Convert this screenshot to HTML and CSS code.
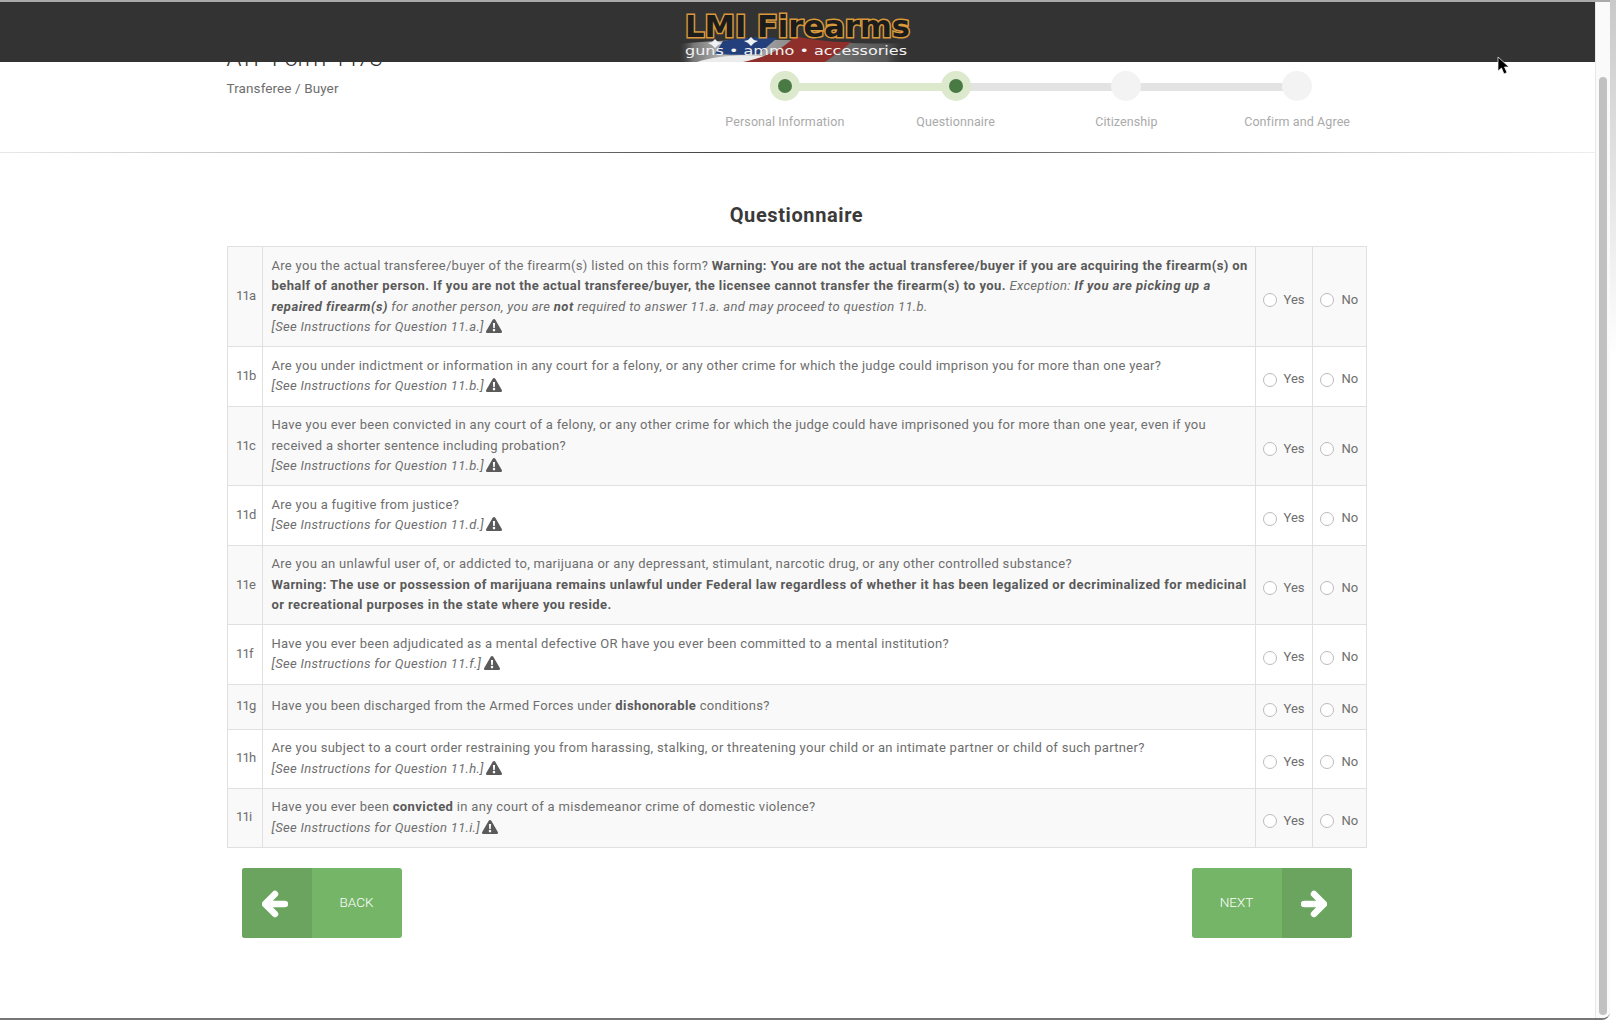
FILE: index.html
```html
<!DOCTYPE html>
<html lang="en">
<head>
    <meta charset="UTF-8">
    <title>ATF Form 4473 - Questionnaire</title>
    <link rel="stylesheet" href="styles.css">
</head>
<body>
<div class="window">
    <div class="page">
        <header class="topbar">
            <svg class="logo" width="240" height="60" viewBox="0 0 240 60">
                <defs>
                    <linearGradient id="fade" x1="0" x2="1" y1="0" y2="0">
                        <stop offset="0" stop-color="#444" stop-opacity="0"/>
                        <stop offset="0.06" stop-color="#777"/>
                        <stop offset="0.2" stop-color="#bbb"/>
                        <stop offset="0.6" stop-color="#777"/>
                        <stop offset="0.88" stop-color="#555"/>
                        <stop offset="0.96" stop-color="#333" stop-opacity="0"/>
                    </linearGradient>
                </defs>
                <path d="M0 60 V42 C40 38 100 36 150 40 C190 42 220 42 236 40 V60 Z" fill="url(#fade)"/>
                <path d="M18 60 C40 52 90 50 120 60 Z" fill="#ececec"/>
                <path d="M44 39 C60 36 80 34 98 36 L80 52 C66 53 50 53 36 52 Z" fill="#23407c"/>
                <path d="M116 34 C108 44 92 54 64 60 H146 C154 54 164 48 172 40 C152 40 134 38 116 34 Z" fill="#8e2f2b"/>
                <path d="M33 40 l3 -3 l3 3 l4 1 l-4 2 l-3 3 l-3 -3 l-4 -2 Z" fill="#eef1f6"/>
                <path d="M69 38 l3 -3 l3 3 l4 1 l-4 2 l-3 3 l-3 -3 l-4 -2 Z" fill="#eef1f6"/>
                <text class="logo-name" x="6" y="35" textLength="225" lengthAdjust="spacingAndGlyphs">LMI Firearms</text>
                <text class="logo-tag" x="6" y="53" textLength="222" lengthAdjust="spacingAndGlyphs">guns • ammo • accessories</text>
            </svg>
        </header>

        <div class="container">
            <div class="form-head">
                <div class="form-title">
                    <h1>ATF Form 4473</h1>
                    <p>Transferee / Buyer</p>
                </div>
                <ol class="stepper">
                    <li class="step done"><span class="dot"></span><span class="step-label">Personal Information</span></li>
                    <li class="step current"><span class="dot"></span><span class="step-label">Questionnaire</span></li>
                    <li class="step"><span class="dot"></span><span class="step-label">Citizenship</span></li>
                    <li class="step"><span class="dot"></span><span class="step-label">Confirm and Agree</span></li>
                </ol>
            </div>
        </div>
        <div class="rule"></div>

        <div class="container">
            <h2>Questionnaire</h2>
            <table class="questions">
                <tr>
                    <td class="num">11a</td>
                    <td class="text">Are you the actual transferee/buyer of the firearm(s) listed on this form? <b>Warning: You are not the actual transferee/buyer if you are acquiring the firearm(s) on<br>behalf of another person. If you are not the actual transferee/buyer, the licensee cannot transfer the firearm(s) to you.</b> <i>Exception: <b>If you are picking up a<br>repaired firearm(s)</b> for another person, you are <b>not</b> required to answer 11.a. and may proceed to question 11.b.<br>[See Instructions for Question 11.a.]</i> <svg class="warn" viewBox="0 0 16 14"><use href="#warn-icon"/></svg></td>
                    <td class="answer"><label><span class="radio"></span>Yes</label></td>
                    <td class="answer"><label><span class="radio"></span>No</label></td>
                </tr>
                <tr>
                    <td class="num">11b</td>
                    <td class="text">Are you under indictment or information in any court for a felony, or any other crime for which the judge could imprison you for more than one year?<br><i>[See Instructions for Question 11.b.]</i> <svg class="warn" viewBox="0 0 16 14"><use href="#warn-icon"/></svg></td>
                    <td class="answer"><label><span class="radio"></span>Yes</label></td>
                    <td class="answer"><label><span class="radio"></span>No</label></td>
                </tr>
                <tr>
                    <td class="num">11c</td>
                    <td class="text">Have you ever been convicted in any court of a felony, or any other crime for which the judge could have imprisoned you for more than one year, even if you<br>received a shorter sentence including probation?<br><i>[See Instructions for Question 11.b.]</i> <svg class="warn" viewBox="0 0 16 14"><use href="#warn-icon"/></svg></td>
                    <td class="answer"><label><span class="radio"></span>Yes</label></td>
                    <td class="answer"><label><span class="radio"></span>No</label></td>
                </tr>
                <tr>
                    <td class="num">11d</td>
                    <td class="text">Are you a fugitive from justice?<br><i>[See Instructions for Question 11.d.]</i> <svg class="warn" viewBox="0 0 16 14"><use href="#warn-icon"/></svg></td>
                    <td class="answer"><label><span class="radio"></span>Yes</label></td>
                    <td class="answer"><label><span class="radio"></span>No</label></td>
                </tr>
                <tr>
                    <td class="num">11e</td>
                    <td class="text">Are you an unlawful user of, or addicted to, marijuana or any depressant, stimulant, narcotic drug, or any other controlled substance?<br><b>Warning: The use or possession of marijuana remains unlawful under Federal law regardless of whether it has been legalized or decriminalized for medicinal<br>or recreational purposes in the state where you reside.</b></td>
                    <td class="answer"><label><span class="radio"></span>Yes</label></td>
                    <td class="answer"><label><span class="radio"></span>No</label></td>
                </tr>
                <tr>
                    <td class="num">11f</td>
                    <td class="text">Have you ever been adjudicated as a mental defective OR have you ever been committed to a mental institution?<br><i>[See Instructions for Question 11.f.]</i> <svg class="warn" viewBox="0 0 16 14"><use href="#warn-icon"/></svg></td>
                    <td class="answer"><label><span class="radio"></span>Yes</label></td>
                    <td class="answer"><label><span class="radio"></span>No</label></td>
                </tr>
                <tr>
                    <td class="num">11g</td>
                    <td class="text">Have you been discharged from the Armed Forces under <b>dishonorable</b> conditions?</td>
                    <td class="answer"><label><span class="radio"></span>Yes</label></td>
                    <td class="answer"><label><span class="radio"></span>No</label></td>
                </tr>
                <tr>
                    <td class="num">11h</td>
                    <td class="text">Are you subject to a court order restraining you from harassing, stalking, or threatening your child or an intimate partner or child of such partner?<br><i>[See Instructions for Question 11.h.]</i> <svg class="warn" viewBox="0 0 16 14"><use href="#warn-icon"/></svg></td>
                    <td class="answer"><label><span class="radio"></span>Yes</label></td>
                    <td class="answer"><label><span class="radio"></span>No</label></td>
                </tr>
                <tr>
                    <td class="num">11i</td>
                    <td class="text">Have you ever been <b>convicted</b> in any court of a misdemeanor crime of domestic violence?<br><i>[See Instructions for Question 11.i.]</i> <svg class="warn" viewBox="0 0 16 14"><use href="#warn-icon"/></svg></td>
                    <td class="answer"><label><span class="radio"></span>Yes</label></td>
                    <td class="answer"><label><span class="radio"></span>No</label></td>
                </tr>
            </table>

            <div class="actions">
                <button class="btn btn-back" type="button">
                    <span class="btn-icon"><svg width="26" height="28" viewBox="0 0 26 28"><path d="M23 14 H5 M13 4 L3 14 L13 24" /></svg></span>
                    <span class="btn-text">BACK</span>
                </button>
                <button class="btn btn-next" type="button">
                    <span class="btn-text">NEXT</span>
                    <span class="btn-icon"><svg width="26" height="28" viewBox="0 0 26 28"><path d="M3 14 H21 M13 4 L23 14 L13 24" /></svg></span>
                </button>
            </div>
        </div>

        <svg class="cursor" width="14" height="20" viewBox="0 0 14 20"><path d="M1 1 V15 L4.500 12 L7 18 L10 16.500 L7.500 11 L12 11 Z" fill="#000" stroke="#fff" stroke-width="0.700"/></svg>
    </div>
    <div class="scrollbar"><div class="thumb"></div></div>
</div>

<svg class="defs" width="0" height="0">
    <symbol id="warn-icon" viewBox="0 0 16 14">
        <path fill-rule="evenodd" d="M8 0 C8.500 0 9 .3 9.300 .8 L15.800 12 C16.300 12.900 15.700 14 14.600 14 H1.400 C.3 14 -.3 12.900 .2 12 L6.700 .8 C7 .3 7.500 0 8 0 Z M6.900 4 L7.200 9 H8.800 L9.100 4 Z M8 9.800 A1.300 1.300 0 1 0 8 12.400 A1.300 1.300 0 1 0 8 9.800 Z"/>
    </symbol>
</svg>
</body>
</html>
```

FILE: styles.css
```css
html, body {
    margin: 0;
    padding: 0;
    height: 100%;
    overflow: hidden;
}
body {
    font-family: Roboto, 'Liberation Sans', sans-serif;
    font-size: 13px;
    color: #6e6e6e;
    background: linear-gradient(#c9c9c9, #fff 35%);
}
.window {
    display: flex;
    width: 1610px;
    height: 1020px;
    box-sizing: border-box;
    background: #fff;
    border-top: 2px solid #aaa;
    border-bottom: 2px solid #777;
    border-bottom-right-radius: 8px;
    overflow: hidden;
}
.page {
    position: relative;
    flex: 1;
    overflow: hidden;
    border-right: 1px solid #e8e8e8;
}
.scrollbar {
    width: 14px;
    padding: 75px 3px 3px;
    box-sizing: border-box;
    background: #fafafa;
}
.thumb {
    height: 100%;
    background: #c1c1c1;
    border-radius: 4px;
}
.topbar {
    position: absolute;
    top: 0;
    left: 0;
    right: 0;
    height: 60px;
    display: flex;
    justify-content: center;
    background: #333;
}
.logo {
    margin-left: 3px;
}
.logo-name {
    font-family: 'DejaVu Sans', sans-serif;
    font-weight: bold;
    font-size: 31px;
    fill: #1c1c1c;
    stroke: #d9993b;
    stroke-width: 3px;
    paint-order: stroke;
}
.logo-tag {
    font-family: 'DejaVu Sans', sans-serif;
    font-size: 13px;
    fill: #f2f2f2;
}
.container {
    width: 1140px;
    margin: 0 auto;
    transform: translateX(-1px);
}
.form-head {
    display: flex;
    justify-content: space-between;
    padding-top: 38px;
    height: 112px;
}
.form-title h1 {
    margin: 0;
    font-size: 24px;
    font-weight: 300;
    line-height: 36px;
    letter-spacing: -.5px;
    color: #333;
}
.form-title p {
    margin: 4px 0 0;
    font-size: 13.500px;
    letter-spacing: .1px;
    color: #6e6e6e;
}
.stepper {
    display: flex;
    list-style: none;
    margin: 31px -16px 0 0;
    padding: 0;
    width: 683px;
    height: 60px;
}
.step {
    position: relative;
    flex: 1;
    display: flex;
    flex-direction: column;
    align-items: center;
}
.step::before {
    content: "";
    position: absolute;
    top: 12px;
    left: 50%;
    width: 100%;
    height: 8px;
    background: #e3e3e3;
}
.step:last-child::before {
    display: none;
}
.step.done::before {
    background: #dce9cd;
}
.dot {
    position: relative;
    width: 30px;
    height: 30px;
    border-radius: 50%;
    background: #f3f3f3;
}
.done .dot, .current .dot {
    background: #dce9cd;
}
.done .dot::after, .current .dot::after {
    content: "";
    position: absolute;
    top: 8px;
    left: 8px;
    width: 14px;
    height: 14px;
    border-radius: 50%;
    background: #4a7a44;
}
.step-label {
    margin-top: 13px;
    font-size: 12.500px;
    letter-spacing: .1px;
    color: #aaa;
}
.rule {
    height: 1px;
    background: linear-gradient(90deg, #e8e8e8, #bbb 20%, #444 45%, #555 60%, #ccc 85%, #eee);
}
h2 {
    margin: 48px 0 17px;
    text-align: center;
    font-size: 20px;
    line-height: 28px;
    font-weight: bold;
    letter-spacing: .6px;
    color: #3a3a3a;
}
.questions {
    width: 1140px;
    table-layout: fixed;
    border-collapse: collapse;
}
.questions td {
    border: 1px solid #e0e0e0;
    line-height: 20.600px;
    vertical-align: middle;
}
.questions tr:nth-child(odd) {
    background: #f9f9f9;
}
.num {
    width: 17.500px;
    padding: 0 8px 0 8.500px;
    letter-spacing: -.8px;
    white-space: nowrap;
}
.text {
    padding: 8.500px 8px 8.500px 9px;
    white-space: nowrap;
    letter-spacing: .3px;
}
.text b {
    letter-spacing: .41px;
    color: #5a5a5a;
}
.text i {
    letter-spacing: .31px;
}
.text i b {
    letter-spacing: .5px;
}
.answer {
    width: 49px;
    padding: 6.500px 0 0 6.500px;
    white-space: nowrap;
}
.answer + .answer {
    width: 46px;
    padding-left: 7px;
}
.answer label {
    display: flex;
    align-items: center;
    gap: 7px;
    height: 37.500px;
}
.answer + .answer label {
    gap: 8px;
}
.radio {
    width: 12px;
    height: 12px;
    border: 1px solid #bbb;
    border-radius: 50%;
    background: #fff;
}
.warn {
    width: 16px;
    height: 14px;
    margin-left: -1px;
    fill: #5a5a5a;
    vertical-align: -2px;
}
.defs {
    display: block;
}
.actions {
    display: flex;
    justify-content: space-between;
    padding: 20px 15px 0;
}
.btn {
    display: flex;
    width: 160px;
    height: 70px;
    padding: 0;
    border: none;
    border-radius: 3px;
    overflow: hidden;
    background: #75b568;
    color: #fff;
    font-family: inherit;
    font-size: 13.500px;
    font-weight: 300;
    cursor: pointer;
}
.btn-icon {
    display: flex;
    align-items: center;
    justify-content: center;
    width: 70px;
    height: 70px;
    background: #6aa45e;
}
.btn-icon svg {
    margin-top: 2px;
    fill: none;
    stroke: #fff;
    stroke-width: 6.500;
    stroke-linecap: round;
    stroke-linejoin: round;
}
.btn-back svg {
    margin-right: 4px;
}
.btn-next svg {
    margin-right: 6px;
}
.btn-text {
    flex: 1;
    line-height: 68px;
    text-align: center;
}
.cursor {
    position: absolute;
    top: 54px;
    left: 1497px;
}
```
